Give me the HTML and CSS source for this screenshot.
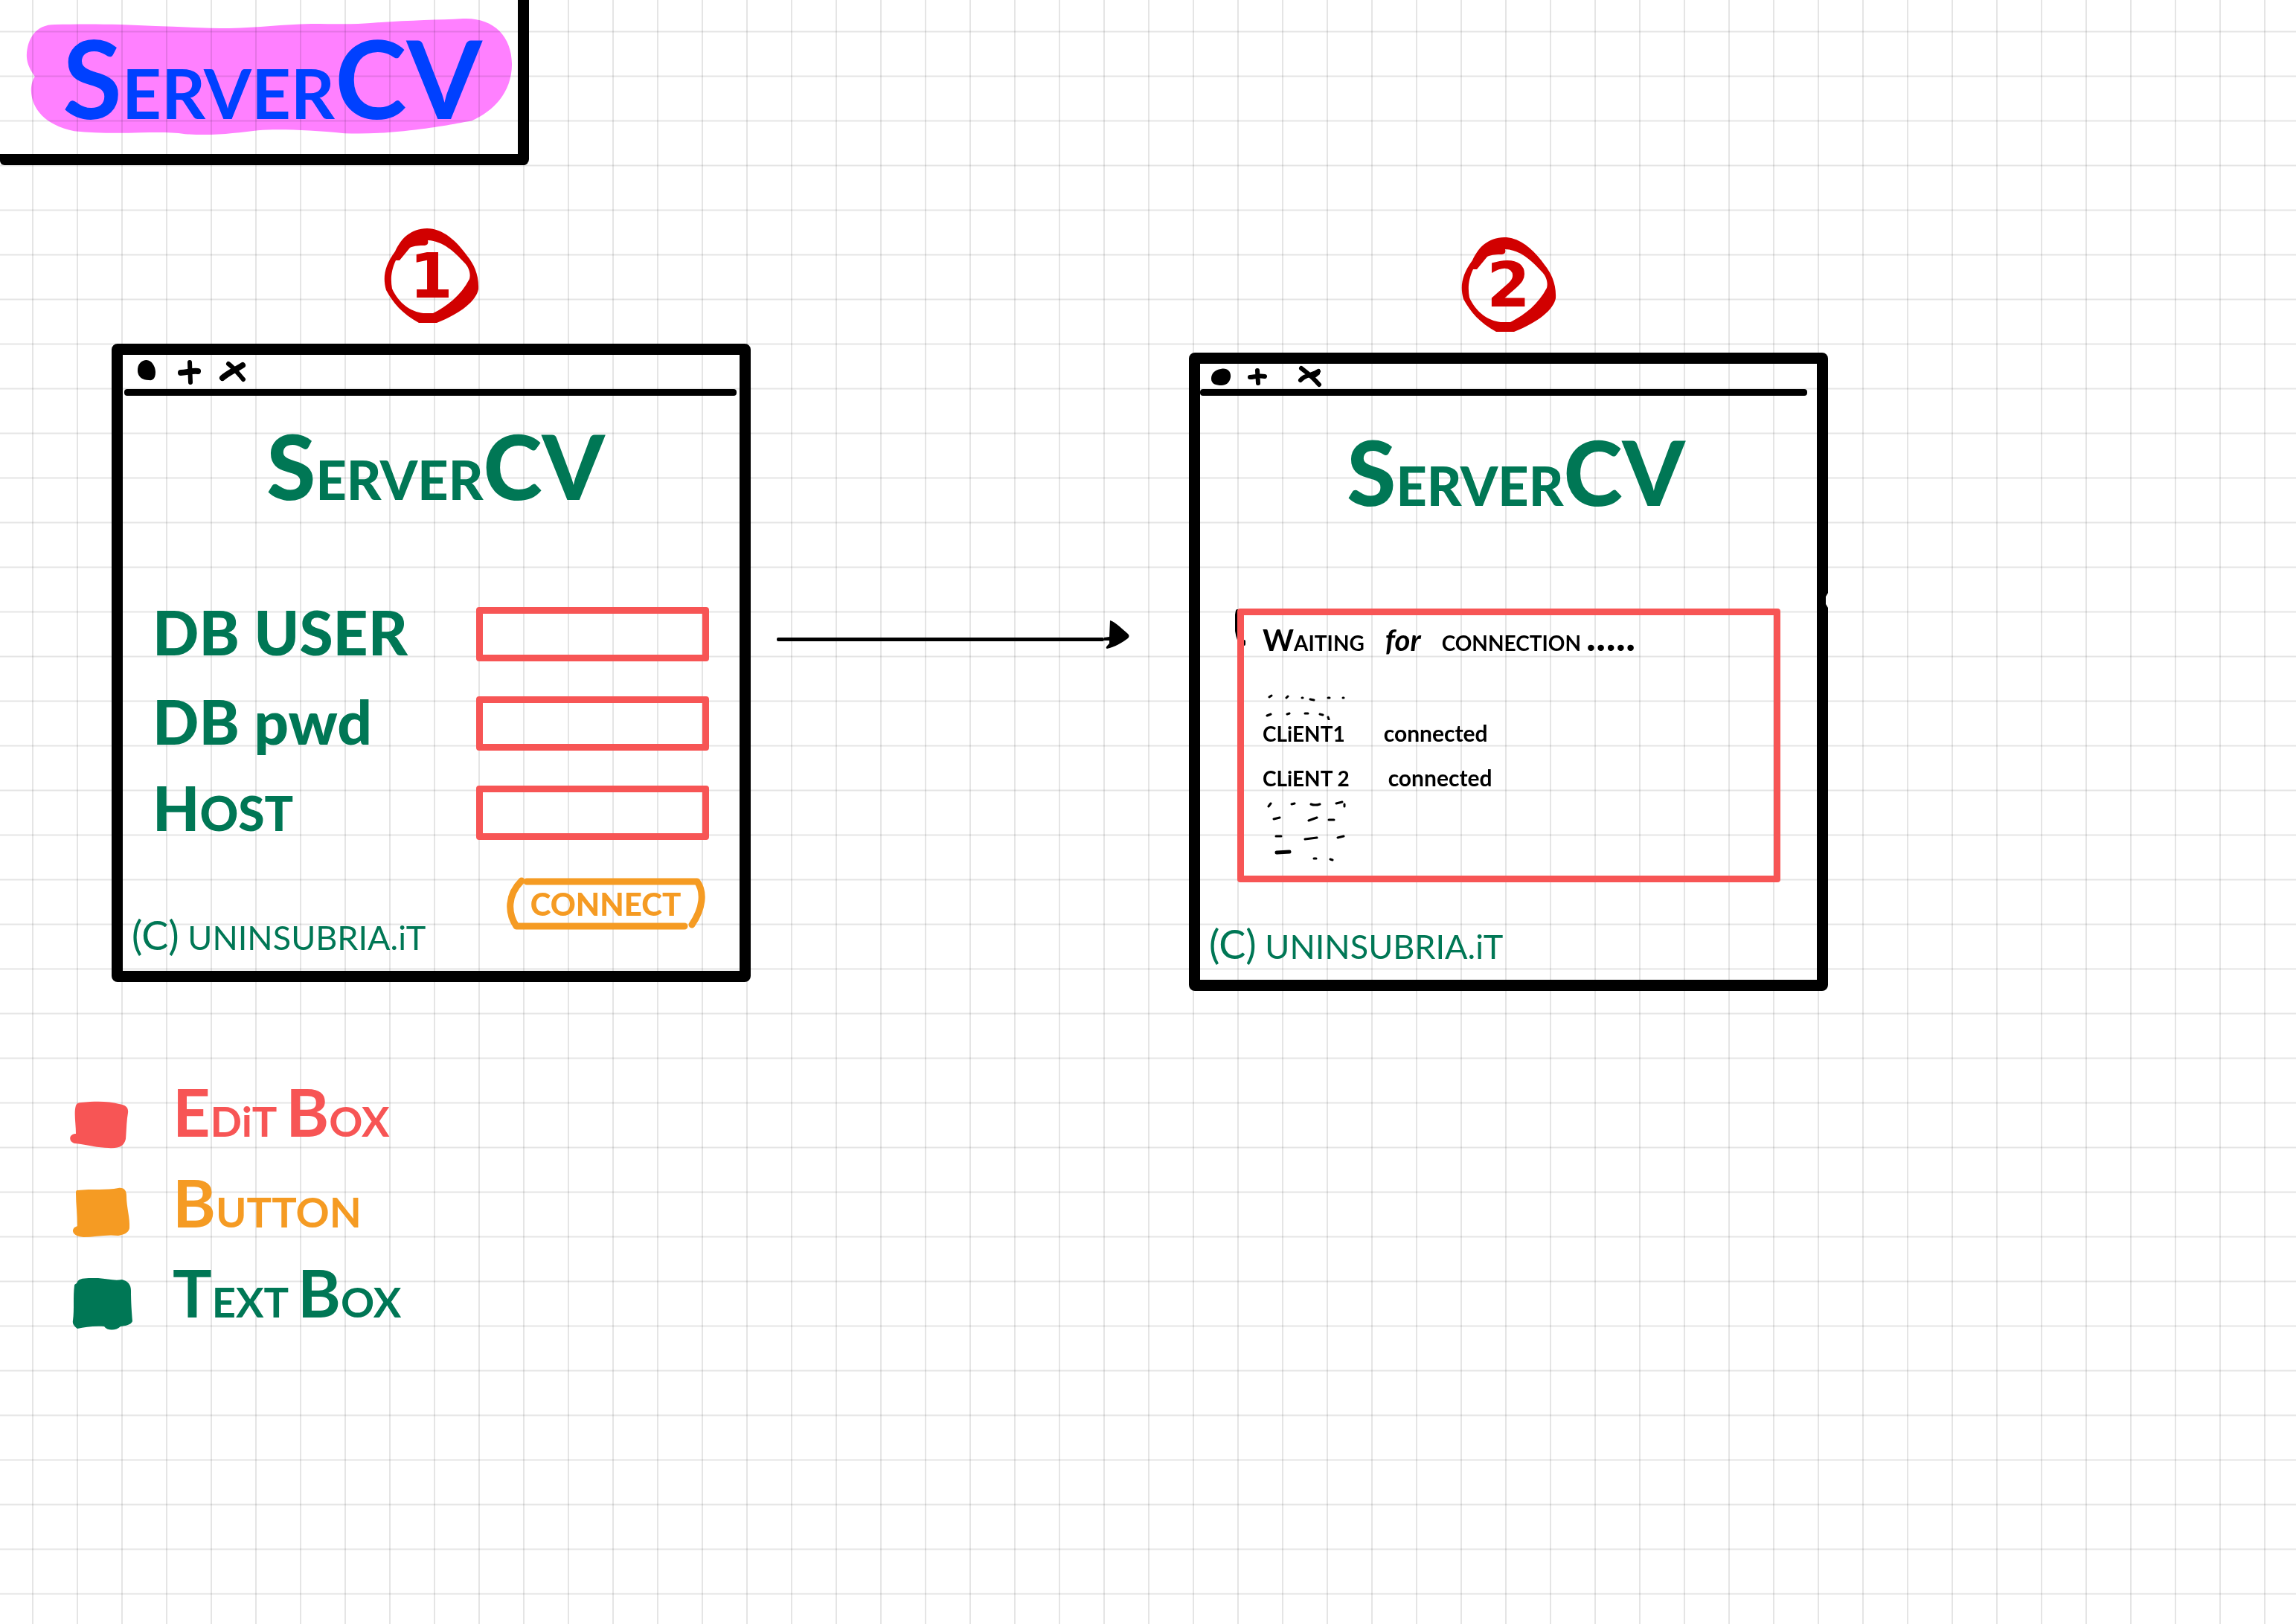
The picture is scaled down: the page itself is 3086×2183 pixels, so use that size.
FILE: index.html
```html
<!DOCTYPE html>
<html lang="en">
<head>
<meta charset="utf-8">
<meta name="viewport" content="width=device-width, initial-scale=1">
<title>Server CV wireframe</title>
<link rel="stylesheet" href="styles.css">
</head>
<body>
<header class="masthead">
  <svg class="masthead-marker" viewBox="0 0 699 207" preserveAspectRatio="none" aria-hidden="true">
    <path d="M47 103C38 90 36 82 36 74C37 52 48 33 74 33C110 32 160 32 210 35C245 36 280 38 310 38C350 37 380 33 420 32C450 32 480 33 500 31C550 27 590 27 625 25C665 23 691 48 691 86C691 125 665 150 637 162C610 167 590 171 545 176C515 179 490 180 465 179C420 175 380 173 348 175C320 178 290 183 250 180C230 177 210 178 190 178C160 179 130 179 100 176C60 168 43 146 42 122C42 114 44 107 47 103Z"/>
  </svg>
  <h1 class="masthead-title">S<span class="masthead-small">ERVER</span>CV</h1>
</header>

<main class="board">
  <section class="screen">
    <div class="step">
      <svg class="step-ring" viewBox="0 0 128 128" aria-hidden="true"><use href="#ring"/></svg>
      <span class="step-number">1</span>
    </div>
    <form class="window">
      <div class="bar">
        <button class="bar-icon" type="button" aria-label="Minimise"><svg viewBox="0 0 40 40"><path d="M19 4C26 3 32 12 32 20C32 28 29 32 23 31C14 31 8 26 8 18C8 10 12 5 19 4Z"/></svg></button>
        <button class="bar-icon" type="button" aria-label="Maximise"><svg viewBox="0 0 40 40"><path class="pen-wide" d="M8 21C16 21 22 18 31 19"/><path class="pen" d="M20 7L21 34"/></svg></button>
        <button class="bar-icon" type="button" aria-label="Close"><svg viewBox="0 0 40 40"><path class="pen-wide" d="M6 28C14 21 22 18 33 11"/><path class="pen" d="M14 9C22 15 27 22 34 30"/></svg></button>
      </div>
      <h2 class="window-title">S<span class="window-title-small">ERVER</span>CV</h2>
      <div class="fields">
        <label class="field-label" for="db-user">DB USER</label>
        <input class="edit-box" id="db-user" type="text">
        <label class="field-label" for="db-pwd">DB pwd</label>
        <input class="edit-box" id="db-pwd" type="password">
        <label class="field-label" for="host">H<span class="field-label-small">OST</span></label>
        <input class="edit-box" id="host" type="text">
      </div>
      <div class="window-foot">
        <p class="copyright"><span class="copyright-mark">(C)</span> UNINSUBRIA.iT</p>
        <button class="connect" type="button">
          <svg class="connect-outline" viewBox="0 0 268 72" preserveAspectRatio="none" aria-hidden="true"><path d="M28 6H257C267 20 265 42 250 64M240 66H14C2 48 2 24 21 5"/></svg>
          <span class="connect-text">CONNECT</span>
        </button>
      </div>
    </form>
  </section>

  <div class="arrow" aria-hidden="true">
    <span class="arrow-line"></span>
    <svg class="arrow-head" viewBox="0 0 34 40"><path d="M8 1C15 3 25 13 32 19C34 21 34 23 32 25C24 31 14 37 4 39C1 38 4 35 7 32V28L0 28V24L7 23Z"/></svg>
  </div>

  <section class="screen screen-log">
    <div class="step">
      <svg class="step-ring" viewBox="0 0 128 128" aria-hidden="true"><use href="#ring"/></svg>
      <span class="step-number">2</span>
    </div>
    <div class="window">
      <svg class="window-nick" viewBox="0 0 3 20" aria-hidden="true"><path d="M3 0L0 5V15L3 20Z"/></svg>
      <div class="bar">
        <button class="bar-icon" type="button" aria-label="Minimise"><svg viewBox="0 0 40 40"><path d="M20 10C28 8 34 13 33 21C32 28 27 32 21 32C13 32 7 30 7 23C7 16 12 11 20 10Z"/></svg></button>
        <button class="bar-icon" type="button" aria-label="Maximise"><svg viewBox="0 0 40 40"><path class="pen" d="M10 21C16 21 22 18 30 20M20 12L21 29"/></svg></button>
        <button class="bar-icon" type="button" aria-label="Close"><svg viewBox="0 0 40 40"><path class="pen" d="M8 25C14 17 24 19 32 13M9 9C16 14 25 22 33 31"/><path d="M20 17L34 10L34 17L25 24Z"/></svg></button>
      </div>
      <h2 class="window-title">S<span class="window-title-small">ERVER</span>CV</h2>
      <div class="log" role="log">
        <svg class="log-slip" viewBox="0 0 14 60" aria-hidden="true"><path d="M3 3C0 16 1 32 5 42M12 44V48"/></svg>
        <p class="log-status"><span><span class="log-status-initial">W</span>AITING</span> <i class="log-status-for">for</i> <span>CONNECTION <span class="log-status-more">.....</span></span></p>
        <svg class="log-dots" viewBox="0 0 120 84" aria-hidden="true"><path d="M9 53L12 51M32 54L34 52M53 54H54M64 56L69 57M88 54H90M108 54H109M6 78L11 76M33 76L36 75M57 75H61M77 76L81 77M88 80L89 83"/></svg>
        <p class="log-line"><span>CLiENT1</span><span class="log-state">connected</span></p>
        <p class="log-line"><span>CLiENT 2</span><span class="log-state">connected</span></p>
        <svg class="log-dots" viewBox="0 0 120 115" aria-hidden="true"><path d="M8 22L11 18M39 19L43 18M65 19C70 21 74 20 77 19M99 18L107 16M110 19V22M15 39L23 37M62 41L73 37M89 40H96M18 62H25M57 66L73 64M101 64L109 62M69 92H72M91 93L94 94"/><path class="log-dash" d="M19 84L36 83"/></svg>
      </div>
      <p class="copyright"><span class="copyright-mark">(C)</span> UNINSUBRIA.iT</p>
    </div>
  </section>
</main>

<ul class="legend">
  <li class="legend-row legend-edit">
    <svg class="swatch" viewBox="0 0 84 76" aria-hidden="true"><path d="M15 10C35 8 52 8 66 12C75 13 79 17 78 24C76 35 76 48 75 59C73 69 65 72 52 71C38 71 24 67 7 65C-2 63-2 53 7 52H8C8 38 5 24 8 14C9 11 12 10 15 10Z"/></svg>
    <span>E<span class="legend-small">DiT </span>B<span class="legend-small">OX</span></span>
  </li>
  <li class="legend-row legend-button">
    <svg class="swatch" viewBox="0 0 84 76" aria-hidden="true"><path d="M10 7C30 5 50 7 65 4C73 3 76 7 76 15C76 30 81 44 80 58C79 64 72 67 65 68C48 66 33 70 18 70C5 69 1 62 6 57L10 55C10 40 8 25 8 11C8 9 8 7 10 7Z"/></svg>
    <span>B<span class="legend-small">UTTON</span></span>
  </li>
  <li class="legend-row legend-text">
    <svg class="swatch" viewBox="0 0 84 76" aria-hidden="true"><path d="M10 8C13 2 25 3 38 3C50 4 60 7 70 5C78 7 82 12 82 20C82 36 83 48 84 61C82 66 75 67 68 68C62 74 50 74 46 68C32 67 20 69 10 71C6 68 3 65 4 60C6 45 4 28 6 13C6 11 8 11 9 10Z"/></svg>
    <span>T<span class="legend-small">EXT </span>B<span class="legend-small">OX</span></span>
  </li>
</ul>

<svg class="symbols" aria-hidden="true">
  <symbol id="ring" viewBox="0 0 128 128"><path fill-rule="evenodd" d="M58 0C79 0 98 17 112 37C121 48 128 63 127 82C124 97 104 114 71 127H47C25 115 12 100 3 83C-2 66 1 50 15 31C24 12 36 1 58 0ZM59 16C60 20 59 23 53 23C44 23 39 24 35 26L21 43H16C9 58 9 70 11 81C20 101 36 112 53 114H66C84 105 103 91 115 68C117 60 114 52 108 46C95 32 80 17 59 16Z"/></symbol>
</svg>
</body>
</html>
```
FILE: styles.css
```css
:root {
  --ink: #000;
  --blue: #0040ff;
  --pink: #ff80ff;
  --green: #007755;
  --red: #f75555;
  --orange: #f59b23;
  --crimson: #d10000;
}

* { box-sizing: border-box; }

body {
  margin: 0;
  min-height: 100vh;
  color: var(--ink);
  font-family: Lato, "Liberation Sans", sans-serif;
  line-height: 1.2;
  background-color: #fff;
  background-image:
    linear-gradient(90deg, transparent 43px, rgba(0, 0, 0, .1) 43px, rgba(0, 0, 0, .1) 45px, transparent 45px),
    linear-gradient(transparent 41px, rgba(0, 0, 0, .05) 41px, rgba(0, 0, 0, .05) 42px, rgba(0, 0, 0, .1) 42px, rgba(0, 0, 0, .1) 43px, rgba(0, 0, 0, .05) 43px, rgba(0, 0, 0, .05) 44px, transparent 44px);
  background-size: 60px 60px;
}

h1, h2, p, ul { margin: 0; padding: 0; }

button { font: inherit; color: inherit; background: none; border: 0; padding: 0; }

svg { display: block; }

.symbols { position: absolute; width: 0; height: 0; }

/* Page heading */
.masthead {
  position: relative;
  width: fit-content;
  padding: 16px 48px 16px 84px;
  border-right: 15px solid var(--ink);
  border-bottom: 15px solid var(--ink);
  border-radius: 0 0 8px 6px;
}

.masthead-marker {
  position: absolute;
  inset: 0;
  width: 100%;
  height: 100%;
  fill: var(--pink);
  mix-blend-mode: multiply;
}

.masthead-title {
  position: relative;
  color: var(--blue);
  font-size: 146px;
  font-weight: 700;
}

.masthead-small { font-size: 92px; }

/* Two screens joined by an arrow */
.board {
  display: grid;
  grid-template-columns: 150fr 859fr 589fr 859fr 629fr;
  align-items: start;
  padding-top: 85px;
}

.screen { grid-column: 2; }

.screen-log { grid-column: 4; padding-top: 12px; }

.step {
  display: grid;
  place-items: center;
  width: 128px;
  height: 128px;
  margin: 0 auto 27px;
  color: var(--crimson);
}

.step-ring, .step-number { grid-area: 1 / 1; }

.step-ring { width: 100%; height: 100%; fill: currentColor; }

.step-number {
  font-family: "DejaVu Sans", sans-serif;
  font-size: 84px;
  font-weight: 700;
  line-height: 1;
}

.window {
  position: relative;
  border: 15px solid var(--ink);
  border-radius: 8px;
}

.window-nick {
  position: absolute;
  top: 308px;
  right: -15px;
  width: 3px;
  height: 20px;
  fill: #fff;
}

.bar {
  position: relative;
  display: flex;
  align-items: center;
  gap: 18px;
  height: 55px;
  padding: 0 12px 9px;
}

.bar::after {
  content: "";
  position: absolute;
  inset: auto 4px 0 2px;
  height: 9px;
  border-radius: 4px;
  background: var(--ink);
}

.bar-icon { width: 40px; height: 40px; }

.bar-icon .pen, .bar-icon .pen-wide {
  fill: none;
  stroke: currentColor;
  stroke-width: 6;
  stroke-linecap: round;
}

.bar-icon .pen-wide { stroke-width: 8; }

.screen-log .bar { gap: 9px; height: 43px; padding-left: 8px; }

.screen-log .bar::after { inset: auto 13px 0 0; }

.screen-log .bar-icon:last-child { margin-left: 21px; }

.window-title {
  padding: 22px 0 118px 12px;
  color: var(--green);
  font-size: 120px;
  font-weight: 900;
  text-align: center;
}

.window-title-small { font-size: 72px; }

.screen-log .window-title { padding: 30px 0 112px 20px; }

/* Connection form */
.fields {
  display: grid;
  grid-template-columns: 1fr 313px;
  grid-auto-rows: 73px;
  row-gap: 47px;
  align-items: center;
  padding: 0 41px 0 40px;
}

.field-label {
  padding-bottom: 8px;
  color: var(--green);
  font-size: 82px;
  font-weight: 900;
  line-height: 72px;
}

.field-label-small { font-size: 64px; }

.edit-box {
  width: 100%;
  height: 73px;
  padding: 0 12px;
  border: 9px solid var(--red);
  border-radius: 4px;
  background: none;
  font: inherit;
  font-size: 40px;
}

.window-foot {
  display: flex;
  justify-content: space-between;
  align-items: flex-end;
  padding: 50px 46px 0 0;
}

.copyright {
  padding: 0 0 15px 12px;
  color: var(--green);
  font-size: 45px;
  font-weight: 400;
}

.copyright-mark { font-size: 54px; }

.connect {
  position: relative;
  align-self: flex-start;
  width: 268px;
  height: 72px;
  margin-bottom: 54px;
  color: var(--orange);
}

.connect-outline {
  position: absolute;
  inset: 0;
  width: 100%;
  height: 100%;
  fill: none;
  stroke: currentColor;
  stroke-width: 9;
  stroke-linecap: round;
  stroke-linejoin: round;
}

.connect-text { font-size: 42px; font-weight: 900; }

/* Arrow */
.arrow {
  grid-column: 3;
  display: flex;
  align-items: center;
  padding: 526px 80px 0 35px;
}

.arrow-line {
  flex: 1;
  height: 5px;
  margin-top: 12px;
  border-radius: 2px;
  background: var(--ink);
}

.arrow-head { width: 34px; height: 40px; }

/* Server log */
.log {
  position: relative;
  margin: 0 49px 51px 50px;
  padding: 9px 25px 0;
  border: 9px solid var(--red);
  border-radius: 4px;
}

.log-slip {
  position: absolute;
  z-index: -1;
  top: -9px;
  left: -12px;
  width: 14px;
  height: 60px;
  fill: none;
  stroke: var(--ink);
  stroke-width: 4;
  stroke-linecap: round;
}

.log-status {
  display: flex;
  align-items: baseline;
  gap: 28px;
  height: 48px;
  font-size: 28px;
  font-weight: 700;
}

.log-status-initial { font-size: 40px; }

.log-status-for { font-size: 40px; }

.log-status-more { font-size: 56px; line-height: 0; }

.log-dots {
  width: 120px;
  fill: none;
  stroke: var(--ink);
  stroke-width: 3;
  stroke-linecap: round;
}

.log-dash { stroke-width: 5; }

.log-line {
  display: flex;
  align-items: baseline;
  gap: 52px;
  height: 34px;
  font-size: 28px;
  font-weight: 700;
  line-height: 34px;
}

.log-state { font-size: 30px; }

.log-line + .log-line { margin-top: 26px; }

/* Legend */
.legend {
  display: grid;
  gap: 16px;
  padding: 110px 94px 0;
  list-style: none;
}

.legend-row {
  display: flex;
  align-items: flex-end;
  gap: 54px;
  font-size: 88px;
  font-weight: 700;
}

.legend-small { font-size: 56px; }

.legend-edit { color: var(--red); }

.legend-button { color: var(--orange); }

.legend-text { color: var(--green); }

.swatch { width: 84px; height: 76px; fill: currentColor; }
```
